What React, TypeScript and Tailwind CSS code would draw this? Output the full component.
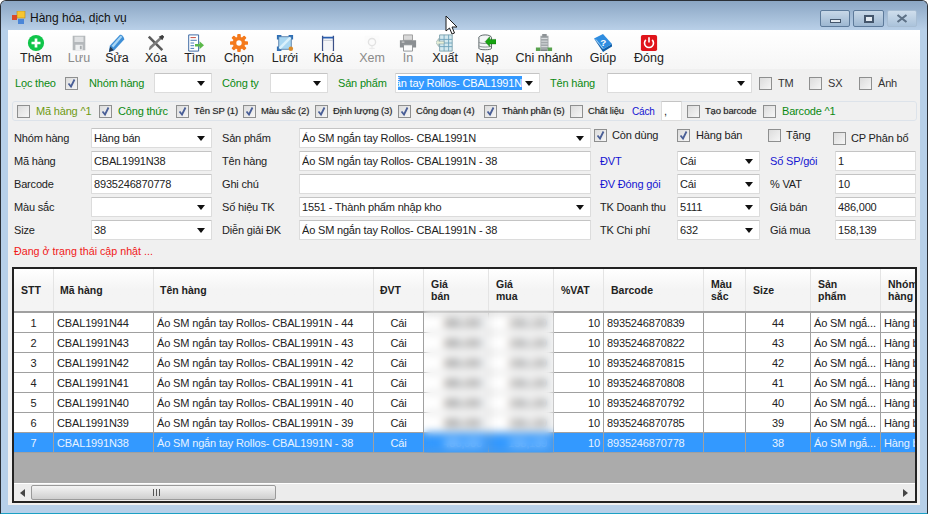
import React from "react";

const font = { fontFamily: '"Liberation Sans", Arial, sans-serif' };

const Icons: Record<string, React.ReactNode> = {
  them: (<><circle cx="10" cy="10" r="9" fill="#10c54a" /><path d="M10 5v10M5 10h10" stroke="#fff" strokeWidth="3" /></>),
  luu: (<><path d="M3 2h14v16H3z" fill="#b4b8bb" /><path d="M5 3h10v6H5z" fill="#dfe1e3" /><path d="M6 12h8v6H6z" fill="#eef0f1" /><path d="M11 13h2v4h-2z" fill="#a6aaad" /></>),
  sua: (<><path d="M2 13 13 1c2-1 5 2 5 5L7 18l-6 2z" fill="#3f8fd6" /><path d="M4 13 14 2l2 1L6 15z" fill="#a9d6f4" /><path d="m1 20 1.500-6 4 4z" fill="#26394f" /></>),
  xoa: (<><path d="M3 2 18 17l-2 2L1 4z" fill="#5b5b5b" /><path d="M17 1l2 2L5 16l-2 2-1-1 1-3z" fill="#7d7d7d" /><path d="M13 3l4-2 2 2-2 4z" fill="#3f3f3f" /></>),
  tim: (<><path d="M3 1h11v18H3z" fill="#fff" stroke="#2d5c9c" /><path d="M5 7h7M5 10h4M5 13h4M5 16h4" stroke="#3b6fb0" /><path d="M5 4h6" stroke="#c0392b" /><path d="M10 11h5V8l5 4.500-5 4.500v-3h-5z" fill="#5bb84a" /></>),
  chon: (<><g fill="#f47a1c"><rect x="8" y="0" width="4" height="20" rx="1" /><rect x="0" y="8" width="20" height="4" rx="1" /><rect x="8" y="0" width="4" height="20" rx="1" transform="rotate(45 10 10)" /><rect x="8" y="0" width="4" height="20" rx="1" transform="rotate(-45 10 10)" /><circle cx="10" cy="10" r="7" /></g><circle cx="10" cy="10" r="3" fill="#fff" /></>),
  luoi: (<><path d="M3 3h14v14H3z" fill="#a9d7f2" stroke="#5a7fa8" /><path d="m4 16 12-12" stroke="#d9f0fb" strokeWidth="3" /><g fill="#2f6fb4"><path d="M1 1h5v2H3v3H1zM14 1h5v5h-2V3h-3zM1 14h2v3h3v2H1z" /></g><circle cx="16.500" cy="16.500" r="2.500" fill="#d98a2a" /></>),
  khoa: (<><path d="M4 2v17M16 2v17" stroke="#3b4f86" strokeWidth="1.500" /><path d="M4 4h12" stroke="#2a5fb0" strokeWidth="2" /><path d="M5 7h10" stroke="#b9bfcc" /><path d="M5 8h10v10H5z" fill="#f4f5f8" /></>),
  xem: (<><path d="M2 2h16v16H2z" fill="#fbfbfb" /><circle cx="10" cy="9" r="4" fill="none" stroke="#e2e2e2" strokeWidth="1.500" /><path d="M10 13v4M7 16h6" stroke="#e8e8e8" /></>),
  in: (<><path d="M5 1h10v6H5z" fill="#d9d9d9" stroke="#9a9a9a" /><path d="M1 7h18v8H1z" fill="#8b8f92" /><path d="M5 12h10v7H5z" fill="#fafafa" stroke="#8b8f92" /><path d="M3 9h3" stroke="#e6e6e6" /></>),
  xuat: (<><path d="M4 1h14v18H4z" fill="#d4e9ef" stroke="#7aa0ab" /><path d="M4 6h14M4 10h14M4 14h14M9 1v18M14 1v18" stroke="#6ea3bb" /><path d="M9 8H3V5L0 9.500 3 14v-3h6z" fill="#e8f0d8" stroke="#8aa5aa" strokeWidth="0.700" /></>),
  nap: (<><ellipse cx="8" cy="4" rx="7" ry="3" fill="#f3f5f5" stroke="#4f5a5c" /><path d="M1 4v12c0 2 14 2 14 0V4" fill="#f3f5f5" stroke="#4f5a5c" /><path d="M1 9c0 2 14 2 14 0M1 13c0 2 14 2 14 0" fill="none" stroke="#7b8688" /><path d="M20 6h-7V3L8 8.500l5 5.500v-3h7z" fill="#17a411" stroke="#0d6b0a" strokeWidth="0.500" /></>),
  chi: (<><path d="M6 2h9v15H6z" fill="#a3a8ab" /><path d="M8 0h5v3H8z" fill="#8e9396" /><path d="M7 5h7M7 8h7M7 11h7M7 14h7" stroke="#dfe2e4" /><path d="M1 15h5v4H1zM14 15h5v4h-5z" fill="#58a24e" /><path d="M6 17h8v2H6z" fill="#7e8487" /></>),
  giup: (<><path d="M0 5 10 0l10 11-10 6z" fill="#2f8de0" /><path d="m0 5 10 12 10-6v3l-10 6z" fill="#0f5ea8" /><path d="m2 6 8 10" stroke="#bfe0f7" strokeWidth="0.800" /><text x="7" y="13" fontSize="11" fontWeight="700" fill="#fff" fontFamily="Liberation Sans">?</text></>),
  dong: (<><rect x="1" y="1" width="18" height="18" rx="2" fill="#e0141a" /><path d="M6.500 6.500a5 5 0 1 0 7 0" fill="none" stroke="#fff" strokeWidth="1.800" /><path d="M10 3.500v6" stroke="#fff" strokeWidth="1.800" /></>),
};

const tools = [
  { k: "them", t: "Thêm", w: "w-[44px]" },
  { k: "luu", t: "Lưu", w: "w-[42px]", dim: true },
  { k: "sua", t: "Sửa", w: "w-[34px]" },
  { k: "xoa", t: "Xóa", w: "w-[44px]" },
  { k: "tim", t: "Tìm", w: "w-[34px]" },
  { k: "chon", t: "Chọn", w: "w-[54px]" },
  { k: "luoi", t: "Lưới", w: "w-[38px]" },
  { k: "khoa", t: "Khóa", w: "w-[48px]" },
  { k: "xem", t: "Xem", w: "w-[40px]", dim: true },
  { k: "in", t: "In", w: "w-[32px]", dim: true },
  { k: "xuat", t: "Xuất", w: "w-[42px]" },
  { k: "nap", t: "Nạp", w: "w-[42px]" },
  { k: "chi", t: "Chi nhánh", w: "w-[72px]" },
  { k: "giup", t: "Giúp", w: "w-[46px]" },
  { k: "dong", t: "Đóng", w: "w-[46px]" },
];

function Cb({ on, className = "" }: { on?: boolean; className?: string }) {
  return (
    <span className={`relative inline-block w-[13px] h-[13px] shrink-0 border border-[#8e8f8f] bg-gradient-to-br from-[#dcdcdc] to-[#f6f6f6] ${className}`}>
      {on && (
        <svg viewBox="0 0 11 11" className="absolute inset-0 w-[11px] h-[11px]">
          <path d="M2.500 5.500 5 8.500 8.500 1.500" fill="none" stroke="#4a5f97" strokeWidth="1.800" />
        </svg>
      )}
    </span>
  );
}

function Arrow() {
  return (
    <svg viewBox="0 0 8 5" className="w-[8px] h-[5px] shrink-0">
      <path d="M0 0h8L4 5z" fill="#111" />
    </svg>
  );
}

function Field({ children, select, className = "w-full" }: { children?: React.ReactNode; select?: boolean; className?: string }) {
  return (
    <div className={`h-[20px] bg-white border border-[#dcdcdc] border-t-[#c4c4c4] rounded-[1px] flex items-center pl-[2px] pr-[6px] text-[11px] tracking-[-0.18px] text-[#222] shrink-0 ${className}`}>
      <span className="flex-1 min-w-0 overflow-hidden whitespace-nowrap">{children}</span>
      {select && <Arrow />}
    </div>
  );
}

function L({ children, className = "" }: { children: React.ReactNode; className?: string }) {
  return <span className={`whitespace-nowrap text-[11px] tracking-[-0.18px] shrink-0 ${className}`}>{children}</span>;
}

const green = "text-[#0b8a12]";
const tiny = "!text-[9.500px] [text-shadow:0_0_1px_rgba(0,0,0,0.35)]";

const cols = [
  { h: "STT", w: "w-[40px]", cls: "justify-center", hc: "pl-[7px]" },
  { h: "Mã hàng", w: "w-[100px]", cls: "pl-[3px]", hc: "pl-[6px]" },
  { h: "Tên hàng", w: "w-[220px]", cls: "pl-[3px]", hc: "pl-[6px]" },
  { h: "ĐVT", w: "w-[50px]", cls: "justify-center", hc: "pl-[6px]" },
  { h: "Giá\nbán", w: "w-[65px]", cls: "justify-end pr-[6px]", hc: "pl-[7px]" },
  { h: "Giá\nmua", w: "w-[65px]", cls: "justify-end pr-[6px]", hc: "pl-[7px]" },
  { h: "%VAT", w: "w-[50px]", cls: "justify-end pr-[3px]", hc: "pl-[7px]" },
  { h: "Barcode", w: "w-[100px]", cls: "pl-[3px]", hc: "pl-[7px]" },
  { h: "Màu\nsắc", w: "w-[42px]", cls: "pl-[3px]", hc: "pl-[7px]" },
  { h: "Size", w: "w-[65px]", cls: "justify-center", hc: "pl-[7px]" },
  { h: "Sản\nphẩm", w: "w-[70px]", cls: "pl-[3px]", hc: "pl-[7px]" },
  { h: "Nhóm\nhàng", w: "w-[80px]", cls: "pl-[3px]", hc: "pl-[7px]" },
];

const rows = [
  ["1", "CBAL1991N44", "Áo SM ngắn tay Rollos- CBAL1991N - 44", "Cái", "486,000", "158,139", "10", "8935246870839", "", "44", "Áo SM ngắ...", "Hàng bán"],
  ["2", "CBAL1991N43", "Áo SM ngắn tay Rollos- CBAL1991N - 43", "Cái", "486,000", "158,139", "10", "8935246870822", "", "43", "Áo SM ngắ...", "Hàng bán"],
  ["3", "CBAL1991N42", "Áo SM ngắn tay Rollos- CBAL1991N - 42", "Cái", "486,000", "158,139", "10", "8935246870815", "", "42", "Áo SM ngắ...", "Hàng bán"],
  ["4", "CBAL1991N41", "Áo SM ngắn tay Rollos- CBAL1991N - 41", "Cái", "486,000", "158,139", "10", "8935246870808", "", "41", "Áo SM ngắ...", "Hàng bán"],
  ["5", "CBAL1991N40", "Áo SM ngắn tay Rollos- CBAL1991N - 40", "Cái", "486,000", "158,139", "10", "8935246870792", "", "40", "Áo SM ngắ...", "Hàng bán"],
  ["6", "CBAL1991N39", "Áo SM ngắn tay Rollos- CBAL1991N - 39", "Cái", "486,000", "158,139", "10", "8935246870785", "", "39", "Áo SM ngắ...", "Hàng bán"],
  ["7", "CBAL1991N38", "Áo SM ngắn tay Rollos- CBAL1991N - 38", "Cái", "486,000", "158,139", "10", "8935246870778", "", "38", "Áo SM ngắ...", "Hàng bán"],
];

export default function App() {
  return (
    <div style={font} className="relative w-[928px] h-[515px] overflow-hidden bg-white text-[#222]">
      <div className="w-full h-[514px] flex flex-col rounded-t-[6px] border border-[#2a2f36] border-b-[#1ba0c4] bg-[#b7d0e9] overflow-hidden">
        {/* title bar */}
        <div className="h-[29px] shrink-0 flex bg-gradient-to-b from-[#8ba6c4] to-[#b9d0e8] pl-[11px] pr-[10px] pt-[9px]">
          <svg viewBox="0 0 14 14" className="w-[14px] h-[14px] mt-[1px]">
            <rect x="5" y="0" width="8" height="7" fill="#f6c532" stroke="#b98a1a" strokeWidth="0.600" />
            <rect x="0" y="4" width="5" height="5" fill="#d94a2a" />
            <rect x="6" y="8" width="6" height="5" fill="#4a86d8" />
          </svg>
          <span className="ml-[4px] text-[12px] leading-[17px] text-[#111]">Hàng hóa, dịch vụ</span>
          <div className="ml-auto flex gap-[3px] h-[17px]">
            <div className="w-[30px] h-[17px] rounded-[2px] border border-[#5d7a9a] bg-gradient-to-b from-[#c8d8e8] to-[#9db7d1] flex items-end justify-center pb-[3px]">
              <span className="w-[11px] h-[4px] bg-[#e4ebf2] border border-[#44566c]" />
            </div>
            <div className="w-[31px] h-[17px] rounded-[2px] border border-[#5d7a9a] bg-gradient-to-b from-[#c8d8e8] to-[#9db7d1] flex items-center justify-center">
              <span className="w-[10px] h-[8px] border-2 border-[#44566c] bg-[#e4ebf2]" />
            </div>
            <div className="w-[30px] h-[17px] rounded-[2px] border border-[#a7bdd3] bg-gradient-to-b from-[#cfdeec] to-[#abc3db] flex items-center justify-center">
              <svg viewBox="0 0 12 9" className="w-[12px] h-[9px]">
                <path d="M1.500 1 10.500 8M10.500 1 1.500 8" stroke="#5d7186" strokeWidth="2.200" />
              </svg>
            </div>
          </div>
        </div>

        {/* body */}
        <div className="mx-[7px] w-[912px] h-[475px] bg-[#f0f0f0] shrink-0 flex flex-col">
          {/* toolbar */}
          <div className="h-[39px] shrink-0 flex pl-[6px] bg-gradient-to-b from-white to-[#f6f6f6]">
            {tools.map((t) => (
              <div key={t.k} className={`${t.w} flex flex-col items-center pt-[4px]`}>
                <svg viewBox="0 0 20 20" className="w-[18px] h-[18px] shrink-0">{Icons[t.k]}</svg>
                <span className={`text-[12.500px] leading-[14px] mt-[-1px] whitespace-nowrap ${t.dim ? "text-[#8a8a8a]" : "text-[#222]"}`}>{t.t}</span>
              </div>
            ))}
          </div>

          {/* filter row */}
          <div className="h-[32px] shrink-0 flex items-center pl-[7px] pb-[7px] pt-[3px]">
            <L className={`w-[50px] ${green}`}>Lọc theo</L>
            <Cb on />
            <L className={`ml-[11px] w-[65px] ${green}`}>Nhóm hàng</L>
            <Field select className="w-[58px]" />
            <L className={`ml-[10px] w-[48px] ${green}`}>Công ty</L>
            <Field select className="w-[58px]" />
            <L className={`ml-[10px] w-[57px] ${green}`}>Sản phẩm</L>
            <Field select className="w-[145px]">
              <span className="flex justify-end overflow-hidden w-[124px]">
                <span className="bg-[#3399ff] text-white shrink-0 leading-[14px]">Áo SM ngắn tay Rollos- CBAL1991N</span>
              </span>
            </Field>
            <L className={`ml-[10px] w-[57px] ${green}`}>Tên hàng</L>
            <Field select className="w-[145px]" />
            <Cb className="ml-[7px]" />
            <L className="ml-[6px] w-[31px] text-[#333]">TM</L>
            <Cb />
            <L className="ml-[6px] w-[31px] text-[#333]">SX</L>
            <Cb />
            <L className="ml-[6px] text-[#333]">Ảnh</L>
          </div>

          {/* check row */}
          <div className="ml-[4px] w-[905px] h-[20px] shrink-0 flex items-center pl-[4px] rounded-[3px] border border-[#dde3ea] bg-[#f0f0f0]">
            <Cb />
            <L className="ml-[6px] w-[63px] text-[#6f9a12]">Mã hàng ^1</L>
            <Cb on />
            <L className={`ml-[6px] w-[58px] ${green}`}>Công thức</L>
            <Cb on />
            <L className={`ml-[5px] w-[49px] ${tiny}`}>Tên SP (1)</L>
            <Cb on />
            <L className={`ml-[5px] w-[54px] ${tiny}`}>Màu sắc (2)</L>
            <Cb on />
            <L className={`ml-[5px] w-[65px] ${tiny}`}>Định lượng (3)</L>
            <Cb on />
            <L className={`ml-[5px] w-[68px] ${tiny}`}>Công đoạn (4)</L>
            <Cb on />
            <L className={`ml-[5px] w-[68px] ${tiny}`}>Thành phần (5)</L>
            <Cb />
            <L className={`ml-[5px] w-[44px] ${tiny}`}>Chất liệu</L>
            <L className="w-[29px] !text-[10px] text-[#1414d2]">Cách</L>
            <Field className="w-[21px]">,</Field>
            <Cb className="ml-[5px]" />
            <L className={`ml-[5px] w-[58px] ${tiny}`}>Tạo barcode</L>
            <Cb />
            <L className={`ml-[6px] ${green}`}>Barcode ^1</L>
          </div>

          {/* form */}
          <div className="mt-[7px] ml-[6px] grid shrink-0 grid-cols-[77px_121px_87px_292px_86px_83px_75px_81px] auto-rows-[23px] items-start">
            <L className="leading-[20px]">Nhóm hàng</L>
            <Field select>Hàng bán</Field>
            <L className="pl-[10px] leading-[20px]">Sản phẩm</L>
            <Field select>Áo SM ngắn tay Rollos- CBAL1991N</Field>
            <div className="col-span-4 flex items-center h-[20px] pl-[3px] text-[11px] tracking-[-0.18px]">
              <Cb on className="mb-[5px]" />
              <span className="ml-[5px] w-[65px] mb-[5px]">Còn dùng</span>
              <Cb on className="mb-[5px]" />
              <span className="ml-[6px] w-[72px] mb-[5px]">Hàng bán</span>
              <Cb className="mb-[5px]" />
              <span className="ml-[5px] w-[47px] mb-[5px]">Tặng</span>
              <Cb />
              <span className="ml-[5px]">CP Phân bổ</span>
            </div>

            <L className="leading-[20px]">Mã hàng</L>
            <Field>CBAL1991N38</Field>
            <L className="pl-[10px] leading-[20px]">Tên hàng</L>
            <Field>Áo SM ngắn tay Rollos- CBAL1991N - 38</Field>
            <L className="pl-[9px] leading-[20px] text-[#1414d2]">ĐVT</L>
            <Field select>Cái</Field>
            <L className="pl-[10px] leading-[20px] text-[#1414d2]">Số SP/gói</L>
            <Field>1</Field>

            <L className="leading-[20px]">Barcode</L>
            <Field>8935246870778</Field>
            <L className="pl-[10px] leading-[20px]">Ghi chú</L>
            <Field />
            <L className="pl-[9px] leading-[20px] text-[#1414d2]">ĐV Đóng gói</L>
            <Field select>Cái</Field>
            <L className="pl-[10px] leading-[20px]">% VAT</L>
            <Field>10</Field>

            <L className="leading-[20px]">Màu sắc</L>
            <Field select />
            <L className="pl-[10px] leading-[20px]">Số hiệu TK</L>
            <Field select>1551 - Thành phẩm nhập kho</Field>
            <L className="pl-[9px] leading-[20px]">TK Doanh thu</L>
            <Field select>5111</Field>
            <L className="pl-[10px] leading-[20px]">Giá bán</L>
            <Field>486,000</Field>

            <L className="leading-[20px]">Size</L>
            <Field select>38</Field>
            <L className="pl-[10px] leading-[20px]">Diễn giải ĐK</L>
            <Field>Áo SM ngắn tay Rollos- CBAL1991N - 38</Field>
            <L className="pl-[9px] leading-[20px]">TK Chi phí</L>
            <Field select>632</Field>
            <L className="pl-[10px] leading-[20px]">Giá mua</L>
            <Field>158,139</Field>
          </div>

          <div className="h-[16px] ml-[6px] shrink-0 text-[10.700px] leading-[16px] text-[#f01818]">Đang ở trạng thái cập nhật ...</div>

          {/* grid */}
          <div className="relative mt-[8px] ml-[4px] w-[905px] h-[236px] shrink-0 border-2 border-[#222] flex flex-col overflow-hidden bg-[#ababab]">
            <div className="h-[44px] shrink-0 flex bg-gradient-to-b from-[#ffffff] via-[#f4f4f4] to-[#f4f4f4] border-b-2 border-[#a0a0a0]">
              {cols.map((c) => (
                <div key={c.h} className={`${c.w} shrink-0 flex items-center border-r border-[#e4e4e4] ${c.hc} text-[10.500px] leading-[12px] font-bold text-[#222] whitespace-pre`}>
                  {c.h}
                </div>
              ))}
            </div>
            {rows.map((r, i) => (
              <div key={r[0]} className={`h-[20px] shrink-0 flex text-[11px] tracking-[-0.15px] ${i === 6 ? "bg-[#3399ff] text-[#e8f3ff]" : "bg-white text-[#222]"}`}>
                {cols.map((c, j) => (
                  <div key={c.h} className={`${c.w} shrink-0 flex items-center whitespace-nowrap overflow-hidden border-r border-b border-[#a0a0a0] pt-[1px] ${c.cls}`}>
                    {r[j]}
                  </div>
                ))}
              </div>
            ))}
            <div className="flex-1 bg-[#ababab]" />
            <div className="h-[18px] shrink-0 flex items-center bg-[#ececec] border-t border-white">
              <svg viewBox="0 0 5 8" className="ml-[6px] w-[5px] h-[8px] shrink-0"><path d="M5 0v8L0 4z" fill="#444" /></svg>
              <div className="ml-[6px] w-[245px] h-[15px] shrink-0 rounded-[2px] border border-[#9a9a9a] bg-gradient-to-b from-[#f4f4f4] to-[#cfcfcf] flex items-center justify-center gap-[1px] pl-[6px]">
                <span className="w-[1px] h-[7px] bg-[#555]" />
                <span className="w-[1px] h-[7px] ml-[1px] bg-[#555]" />
                <span className="w-[1px] h-[7px] ml-[1px] bg-[#555]" />
              </div>
              <svg viewBox="0 0 5 8" className="ml-auto mr-[7px] w-[5px] h-[8px] shrink-0"><path d="M0 0v8l5-4z" fill="#444" /></svg>
            </div>
            {/* blurred price columns */}
            <div className="absolute left-[410px] top-[41px] w-[130px] h-[143px] backdrop-blur-[4px]" />
          </div>
        </div>
      </div>

      {/* mouse pointer */}
      <svg viewBox="0 0 13 20" className="absolute left-[445px] top-[15px] w-[13px] h-[20px]">
        <path d="M1 1v15l3.500-3 2.500 6 2.500-1-2.500-6h5z" fill="#fff" stroke="#1a1a1a" strokeWidth="1" />
      </svg>
    </div>
  );
}
